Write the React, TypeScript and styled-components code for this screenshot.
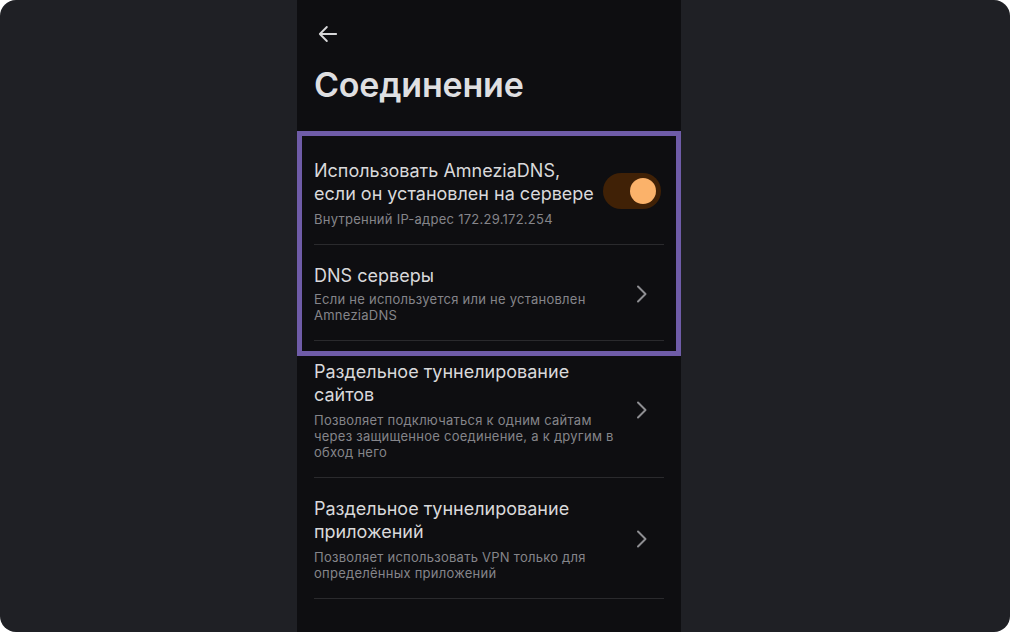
import React from "react";
import styled, { createGlobalStyle } from "styled-components";

const Global = createGlobalStyle`
  html, body { margin: 0; padding: 0; background: #ffffff; }
  body { font-family: Inter, "Noto Sans", sans-serif; }
  * { box-sizing: border-box; }
`;

const Frame = styled.div`
  width: 1010px;
  height: 632px;
  border-radius: 16px;
  background: #1f2025;
  overflow: hidden;
  display: flex;
  padding-left: 297px;
`;

const Panel = styled.div`
  width: 384px;
  height: 100%;
  background: #0e0e11;
  display: flex;
  flex-direction: column;
`;

const Header = styled.div`
  display: flex;
  flex-direction: column;
  padding: 20px 17px 0;
  height: 140px;
`;

const BackButton = styled.div`
  width: 28px;
  height: 28px;
  color: #d7d7d9;
  display: flex;
  align-items: center;
  justify-content: center;
`;

const Title = styled.h1`
  margin: 17px 0 0;
  font-size: 34px;
  line-height: 40px;
  font-weight: 600;
  color: #dfdfe1;
  letter-spacing: -0.2px;
`;

const List = styled.div`
  position: relative;
  display: flex;
  flex-direction: column;
`;

const FocusRing = styled.div`
  position: absolute;
  top: -9px;
  left: 0;
  right: 0;
  height: 225px;
  border: 5px solid #6f5ca8;
  pointer-events: none;
`;

const Item = styled.div`
  margin: 0 17px;
  padding: 19px 0 17px;
  border-bottom: 1px solid #2a2a2d;
  display: flex;
  align-items: center;
  gap: 12px;
`;

const TextCol = styled.div<{ $gap: number }>`
  flex: 1;
  min-width: 0;
  display: flex;
  flex-direction: column;
  gap: ${(p) => p.$gap}px;
  white-space: nowrap;
`;

const ItemTitle = styled.div`
  font-size: 18px;
  line-height: 23px;
  color: #d9d9db;
`;

const ItemSub = styled.div`
  font-size: 13px;
  line-height: 16px;
  letter-spacing: 0.25px;
  color: #85858a;
`;

const Toggle = styled.div<{ $on: boolean }>`
  flex: none;
  width: 58px;
  height: 36px;
  border-radius: 18px;
  background: ${(p) => (p.$on ? "#402106" : "#2a2a2d")};
  display: flex;
  align-items: center;
  justify-content: ${(p) => (p.$on ? "flex-end" : "flex-start")};
  padding: 0 5px;
  margin: 0 3px 4px 0;
`;

const Knob = styled.div`
  width: 26px;
  height: 26px;
  border-radius: 50%;
  background: #fbb26a;
`;

const Chevron = styled.div`
  flex: none;
  width: 24px;
  height: 24px;
  margin-right: 10px;
  color: #8e8e92;
  display: flex;
`;

const ChevronIcon = () => (
  <Chevron>
    <svg width="24" height="24" viewBox="0 0 24 24" fill="none">
      <path d="M8 4.5L15.5 12L8 19.5" stroke="currentColor" strokeWidth="2" strokeLinecap="round" strokeLinejoin="round" />
    </svg>
  </Chevron>
);

type Row = { title: string[]; sub: string[]; toggle?: boolean };

const rows: Row[] = [
  { title: ["Использовать AmneziaDNS,", "если он установлен на сервере"], sub: ["Внутренний IP-адрес 172.29.172.254"], toggle: true },
  { title: ["DNS серверы"], sub: ["Если не используется или не установлен", "AmneziaDNS"] },
  { title: ["Раздельное туннелирование", "сайтов"], sub: ["Позволяет подключаться к одним сайтам", "через защищенное соединение, а к другим в", "обход него"] },
  { title: ["Раздельное туннелирование", "приложений"], sub: ["Позволяет использовать VPN только для", "определённых приложений"] },
];

const Lines = ({ lines }: { lines: string[] }) => (
  <>
    {lines.map((l, i) => (
      <React.Fragment key={i}>
        {i > 0 && <br />}
        {l}
      </React.Fragment>
    ))}
  </>
);

export default function App() {
  return (
    <>
      <Global />
      <Frame>
        <Panel>
          <Header>
            <BackButton>
              <svg width="28" height="28" viewBox="0 0 24 24" fill="none">
                <path d="M19 12H5M11 18L5 12L11 6" stroke="currentColor" strokeWidth="1.6" strokeLinecap="round" strokeLinejoin="round" />
              </svg>
            </BackButton>
            <Title>Соединение</Title>
          </Header>
          <List>
            <FocusRing />
            {rows.map((r, i) => (
              <Item key={i}>
                <TextCol $gap={r.title.length > 1 ? 6 : 4}>
                  <ItemTitle>
                    <Lines lines={r.title} />
                  </ItemTitle>
                  <ItemSub>
                    <Lines lines={r.sub} />
                  </ItemSub>
                </TextCol>
                {r.toggle ? (
                  <Toggle $on>
                    <Knob />
                  </Toggle>
                ) : (
                  <ChevronIcon />
                )}
              </Item>
            ))}
          </List>
        </Panel>
      </Frame>
    </>
  );
}
